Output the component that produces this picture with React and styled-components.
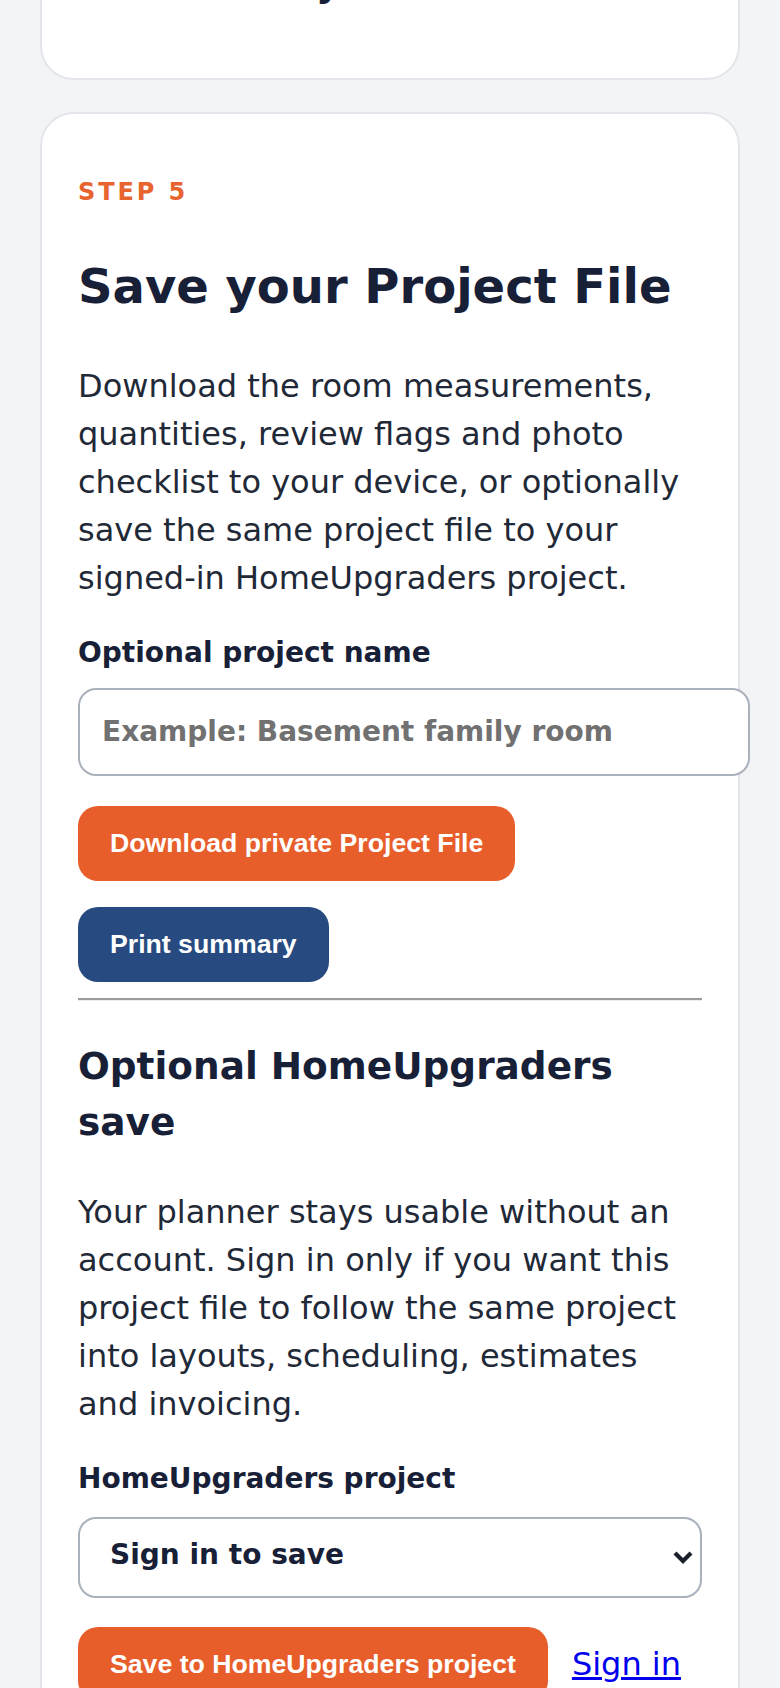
import React from 'react';
import styled, { createGlobalStyle } from 'styled-components';

const Global = createGlobalStyle`
  html, body { margin: 0; padding: 0; background: #f3f4f6; }
  body {
    font-family: "DejaVu Sans", "Noto Sans", sans-serif;
    font-size: 32px;
    line-height: 1.5;
    color: #1f2937;
  }
`;

const Page = styled.main`
  display: flex;
  flex-direction: column;
  gap: 32px;
  margin-top: -83px;
  padding: 0 40px 40px;
`;

const Card = styled.section`
  background: #ffffff;
  border: 2px solid #e2e5e9;
  border-radius: 34px;
  padding: 36px;
`;

const Eyebrow = styled.p`
  margin: 24px 0;
  font-size: 24px;
  line-height: 36px;
  font-weight: 700;
  letter-spacing: 0.12em;
  text-transform: uppercase;
  color: #e8642f;
`;

const Title = styled.h2`
  margin: 0.83em 0;
  font-size: 48px;
  line-height: 1.5;
  font-weight: 700;
  color: #172036;
`;

const Subtitle = styled.h3`
  margin: ${(p) => (p.$flush ? '0 0 31px 12px' : '1em 0')};
  font-size: 37.44px;
  line-height: 1.5;
  font-weight: 700;
  color: #172036;
`;

const Text = styled.p`
  margin: 32px 0;
  color: #1f2937;
`;

const Label = styled.label`
  display: block;
  margin: 34px 0 19px;
  font-size: 28px;
  line-height: 1.2;
  font-weight: 700;
  color: #172036;
`;

const TextInput = styled.input`
  display: block;
  box-sizing: content-box;
  width: 100%;
  height: 33px;
  margin: 0;
  padding: 25px 22px 26px;
  border: 2px solid #a9b1bc;
  border-radius: 18px;
  background: #fff;
  font: 700 28px/31px "DejaVu Sans", sans-serif;
  color: #172036;
  outline: none;
  &::placeholder { color: #717171; opacity: 1; }
`;

const SelectWrap = styled.div`
  position: relative;
  margin-top: 21px;
`;

const Select = styled.select`
  display: block;
  box-sizing: border-box;
  width: 100%;
  height: 81px;
  margin: 0;
  padding: 0 60px 6px 30px;
  border: 2px solid #a9b1bc;
  border-radius: 18px;
  background: #fff;
  appearance: none;
  -webkit-appearance: none;
  font: 700 28px "DejaVu Sans", sans-serif;
  color: #172036;
  outline: none;
`;

const Chevron = styled.svg`
  position: absolute;
  right: 8px;
  top: 50%;
  transform: translateY(-50%);
  pointer-events: none;
`;

const ButtonRow = styled.div`
  display: flex;
  flex-wrap: wrap;
  align-items: center;
  gap: 26px 24px;
  margin-top: ${(p) => p.$top || 30}px;
`;

const Button = styled.button`
  border: none;
  border-radius: 20px;
  padding: 22px 32px;
  background: ${(p) => (p.$variant === 'blue' ? '#274b80' : '#e85e2b')};
  color: #ffffff;
  font: 700 26.67px/1.15 "Liberation Sans", Arial, sans-serif;
  cursor: pointer;
`;

const Divider = styled.hr`
  margin: 16px 0;
  height: 0;
  border: 0;
  border-top: 2px solid #9c9c9c;
  border-bottom: 1px solid #ececec;
`;

const TextLink = styled.a`
  font-size: 32px;
  color: #0000ee;
  text-decoration: underline;
`;

export default function App() {
  return (
    <>
      <Global />
      <Page>
        <Card>
          <Subtitle $flush>Estimate by room</Subtitle>
        </Card>
        <Card>
          <Eyebrow>Step 5</Eyebrow>
          <Title>Save your Project File</Title>
          <Text>
            Download the room measurements, quantities, review flags and photo
            checklist to your device, or optionally save the same project file to
            your signed-in HomeUpgraders project.
          </Text>
          <Label htmlFor="project-name">Optional project name</Label>
          <TextInput id="project-name" placeholder="Example: Basement family room" />
          <ButtonRow>
            <Button>Download private Project File</Button>
            <Button $variant="blue">Print summary</Button>
          </ButtonRow>
          <Divider />
          <Subtitle>Optional HomeUpgraders save</Subtitle>
          <Text>
            Your planner stays usable without an account. Sign in only if you want
            this project file to follow the same project into layouts, scheduling,
            estimates and invoicing.
          </Text>
          <Label htmlFor="hu-project">HomeUpgraders project</Label>
          <SelectWrap>
            <Select id="hu-project" defaultValue="signin">
              <option value="signin">Sign in to save</option>
            </Select>
            <Chevron width="22" height="14" viewBox="0 0 22 14">
              <polyline
                points="3,3 11,11 19,3"
                fill="none"
                stroke="#1a1f2b"
                strokeWidth="4.2"
              />
            </Chevron>
          </SelectWrap>
          <ButtonRow $top={29}>
            <Button>Save to HomeUpgraders project</Button>
            <TextLink href="#">Sign in</TextLink>
          </ButtonRow>
        </Card>
      </Page>
    </>
  );
}
